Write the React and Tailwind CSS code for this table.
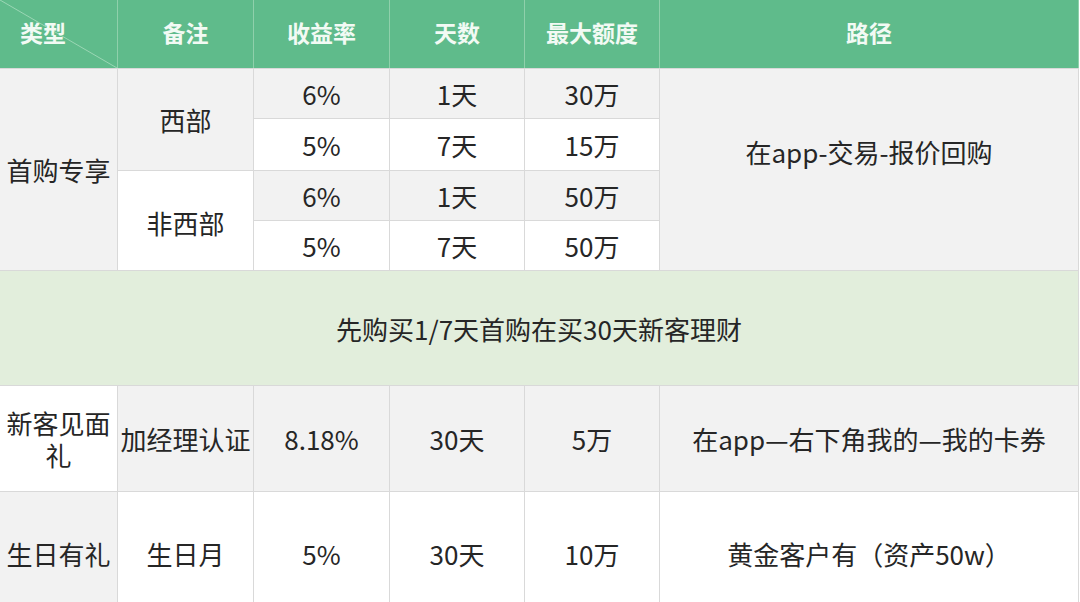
import React from "react";

const headers = ["类型", "备注", "收益率", "天数", "最大额度", "路径"];

const firstBuy = [
  { rate: "6%", days: "1天", max: "30万", bg: "bg-[#f2f2f2]" },
  { rate: "5%", days: "7天", max: "15万", bg: "bg-white" },
  { rate: "6%", days: "1天", max: "50万", bg: "bg-[#f2f2f2]" },
  { rate: "5%", days: "7天", max: "50万", bg: "bg-white" },
];

const rowHeights = ["h-[50px]", "h-[52px]", "h-[50px]", "h-[50px]"];

const cell = "border border-[#d9d9d9] text-center align-middle p-0";

export default function App() {
  return (
    <div className="w-[1080px] h-[602px] overflow-hidden bg-white font-['Noto_Sans_CJK_SC',sans-serif] text-[26px] text-[#262626]">
      <table className="w-[1080px] table-fixed border-collapse -mt-px -ml-px">
        <colgroup>
          <col className="w-[118px]" />
          <col className="w-[136px]" />
          <col className="w-[136px]" />
          <col className="w-[135px]" />
          <col className="w-[135px]" />
          <col />
        </colgroup>
        <thead>
          <tr className="h-[69px] bg-[#5fbb8b] text-[23px] font-bold text-[#f2faf4]">
            {headers.map((h, i) => (
              <th
                key={h}
                className={
                  i === 0
                    ? "relative border border-[#8fd0ab] border-b-[#d9d9d9] text-left pl-5 pb-1 align-middle"
                    : "border border-[#8fd0ab] border-b-[#d9d9d9] text-center pb-1 align-middle"
                }
              >
                {i === 0 && (
                  <svg
                    className="absolute inset-0 w-full h-full"
                    viewBox="0 0 100 100"
                    preserveAspectRatio="none"
                  >
                    <line x1="0" y1="0" x2="100" y2="100" stroke="#9ad6b4" strokeWidth="1" vectorEffect="non-scaling-stroke" />
                  </svg>
                )}
                <span className="relative">{h}</span>
              </th>
            ))}
          </tr>
        </thead>
        <tbody>
          {firstBuy.map((r, i) => (
            <tr key={i} className={rowHeights[i]}>
              {i === 0 && (
                <td rowSpan={4} className={`${cell} bg-[#f2f2f2]`}>
                  首购专享
                </td>
              )}
              {i === 0 && (
                <td rowSpan={2} className={`${cell} bg-[#f2f2f2]`}>
                  西部
                </td>
              )}
              {i === 2 && (
                <td rowSpan={2} className={`${cell} bg-white pt-1`}>
                  非西部
                </td>
              )}
              <td className={`${cell} ${r.bg}`}>{r.rate}</td>
              <td className={`${cell} ${r.bg}`}>{r.days}</td>
              <td className={`${cell} ${r.bg}`}>{r.max}</td>
              {i === 0 && (
                <td rowSpan={4} className={`${cell} bg-[#f2f2f2] pb-[36px]`}>
                  在app-交易-报价回购
                </td>
              )}
            </tr>
          ))}
          <tr className="h-[115px]">
            <td colSpan={6} className={`${cell} bg-[#e2eedc]`}>
              先购买1/7天首购在买30天新客理财
            </td>
          </tr>
          <tr className="h-[106px]">
            <td className={`${cell} bg-white leading-[32px]`}>
              新客见面
              <br />
              礼
            </td>
            <td className={`${cell} bg-[#f2f2f2] whitespace-nowrap`}>加经理认证</td>
            <td className={`${cell} bg-[#f2f2f2]`}>8.18%</td>
            <td className={`${cell} bg-[#f2f2f2]`}>30天</td>
            <td className={`${cell} bg-[#f2f2f2]`}>5万</td>
            <td className={`${cell} bg-[#f2f2f2]`}>在app—右下角我的—我的卡券</td>
          </tr>
          <tr className="h-[124px]">
            <td className={`${cell} bg-[#f2f2f2]`}>生日有礼</td>
            <td className={`${cell} bg-white`}>生日月</td>
            <td className={`${cell} bg-white`}>5%</td>
            <td className={`${cell} bg-white`}>30天</td>
            <td className={`${cell} bg-white`}>10万</td>
            <td className={`${cell} bg-white`}>黄金客户有（资产50w）</td>
          </tr>
        </tbody>
      </table>
    </div>
  );
}
